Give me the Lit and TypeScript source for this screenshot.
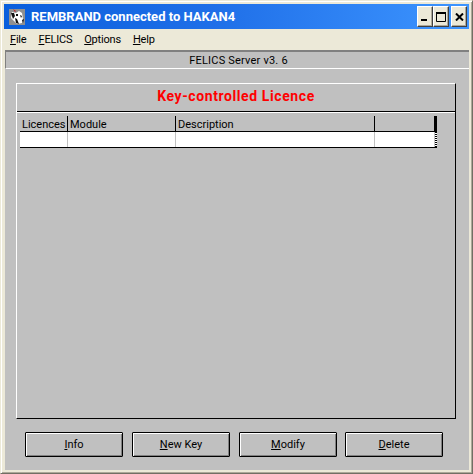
import { LitElement, html, css } from "lit";
import { customElement } from "lit/decorators.js";

@customElement("app-root")
export class AppRoot extends LitElement {
  static styles = css`
    :host { display: block; width: 473px; height: 474px; overflow: hidden; font-family: Roboto, "Liberation Sans", sans-serif; font-size: 11px; color: #000; }
    * { box-sizing: border-box; }
    .win { width: 473px; height: 474px; background: #ece9d8; border: 1px solid; border-color: #ece9d8 #716f64 #716f64 #ece9d8; box-shadow: inset 1px 1px 0 #fff, inset -1px -1px 0 #aca899; padding: 3px; display: flex; flex-direction: column; }
    .title { height: 25px; flex: none; background: linear-gradient(90deg, #0a5fdc 0%, #1f6fe8 45%, #3d95ff 100%); display: flex; align-items: center; padding: 0 2px 0 4px; color: #fff; font-weight: 700; font-size: 13px; }
    .ico { width: 16px; height: 16px; margin-left: 1px; margin-right: 6px; flex: none; display: block; }
    .ttext { flex: 1; white-space: nowrap; margin-top: -1px; }
    .wbtns { display: flex; }
    .wb { width: 16px; height: 21px; background: #ece9d8; border: 1px solid; border-color: #fff #404040 #404040 #fff; box-shadow: inset -1px -1px 0 #aca899; display: flex; align-items: center; justify-content: center; }
    .wb svg { display: block; }
    .wb.close { margin-left: 2px; }
    .menu { height: 21px; flex: none; display: flex; align-items: center; gap: 12px; padding: 0 6px; font-size: 11px; letter-spacing: -0.2px; }
    u { text-decoration: underline; text-underline-offset: 1px; }
    .body { flex: 1; background: #c0c0c0; display: flex; flex-direction: column; margin-left: 1px; }
    .status { height: 19px; flex: none; border: 1px solid; border-width: 2px 0 1px 1px; border-color: #808080 #fff #fff #808080; padding-left: 2px; text-align: center; line-height: 17px; font-size: 11px; letter-spacing: 0.2px; }
    .panel { flex: none; width: 440px; height: 336px; margin: 14px 0 0 11px; border: 1px solid; border-color: #fff #000 #000 #fff; display: flex; flex-direction: column; }
    .phead { height: 28px; flex: none; border-bottom: 1px solid #000; box-shadow: 0 1px 0 #fff; color: #f00; font-weight: 700; font-size: 14px; letter-spacing: 0.6px; text-align: center; line-height: 25px; }
    .table { width: 417px; margin: 4px 0 0 3px; flex: none; border-bottom: 1px solid #000; }
    .row { display: grid; grid-template-columns: 48px 108px 199px 60px 2px; }
    .hrow { height: 16px; border-bottom: 1px solid #000; }
    .hrow > div { border-right: 1px solid #000; padding-left: 2px; line-height: 17px; white-space: nowrap; overflow: hidden; }
    .hrow > div:last-child { background: #000; border: 0; padding: 0; }
    .drow { height: 15px; background: #fff; }
    .drow > div { border-right: 1px solid #c0c0c0; }
    .drow > div:last-child { border: 0; background: repeating-linear-gradient(180deg, #000 0 1px, #fff 1px 2px); }
    .btns { display: flex; gap: 9px; padding: 13px 0 0 20px; }
    .btn { width: 98px; height: 25px; background: #c0c0c0; border: 1px solid #000; border-radius: 1px; box-shadow: inset 1px 1px 0 #fff, inset -1px -1px 0 #808080; display: flex; align-items: center; justify-content: center; font-size: 11px; font-family: inherit; padding: 0; color: #000; }
    .btn.last { margin-left: -1px; }
  `;

  render() {
    return html`
      <div class="win">
        <div class="title">
          <svg class="ico" viewBox="0 0 16 16">
            <rect width="16" height="16" fill="#909090"/>
            <path d="M3 3l4 1 3-2 3 2 1 6-1 4-5 1-3-3-3-3z" fill="#fff"/>
            <path d="M2 4l3 0 1 3-2 3zM6 9l2 1 2 5-3-1zM11 6l2 1-1 2zM7 5l2 0 0 2-2 0zM13 11l2-1-1 4z" fill="#111"/>
            <path d="M4 0l3 2-1 1z" fill="#c02020"/>
          </svg>
          <span class="ttext">REMBRAND connected to HAKAN4</span>
          <div class="wbtns">
            <div class="wb"><svg width="8" height="10" viewBox="0 0 8 10"><rect x="0" y="7" width="6" height="2" fill="#000"/></svg></div>
            <div class="wb"><svg width="11" height="10" viewBox="0 0 11 10"><path d="M0.5 1.5h9v8h-9z" fill="none" stroke="#000"/><rect y="0" width="10" height="2" fill="#000"/></svg></div>
            <div class="wb close"><svg width="9" height="8" viewBox="0 0 9 8"><path d="M1 0.5l7 7M8 0.5l-7 7" stroke="#000" stroke-width="2" fill="none"/></svg></div>
          </div>
        </div>
        <div class="menu">
          <span><u>F</u>ile</span><span><u>F</u>ELICS</span><span><u>O</u>ptions</span><span><u>H</u>elp</span>
        </div>
        <div class="body">
          <div class="status">FELICS Server v3. 6</div>
          <div class="panel">
            <div class="phead">Key-controlled Licence</div>
            <div class="table">
              <div class="row hrow"><div>Licences</div><div>Module</div><div>Description</div><div></div><div></div></div>
              <div class="row drow"><div></div><div></div><div></div><div></div><div></div></div>
            </div>
          </div>
          <div class="btns">
            <button class="btn"><span><u>I</u>nfo</span></button>
            <button class="btn"><span><u>N</u>ew Key</span></button>
            <button class="btn"><span><u>M</u>odify</span></button>
            <button class="btn last"><span><u>D</u>elete</span></button>
          </div>
        </div>
      </div>
    `;
  }
}
